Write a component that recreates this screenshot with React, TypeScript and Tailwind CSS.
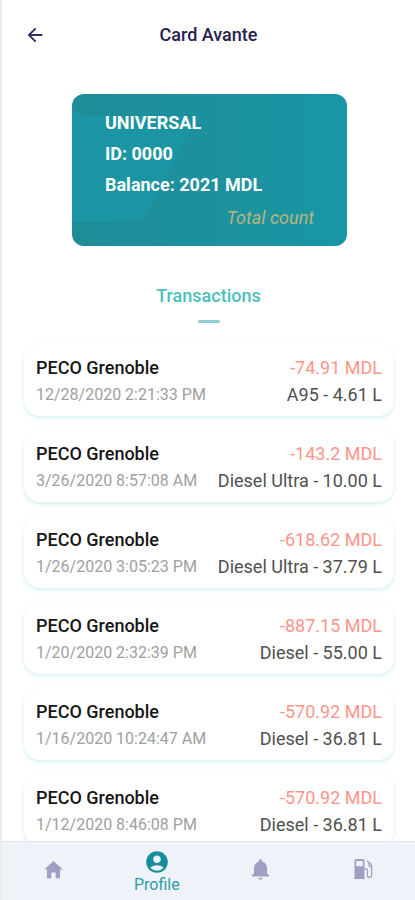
import React from "react";
import { IoMdHome, IoMdNotifications } from "react-icons/io";
import { MdAccountCircle, MdArrowBack } from "react-icons/md";

type Transaction = {
  station: string;
  date: string;
  amount: string;
  fuel: string;
};

const transactions: Transaction[] = [
  { station: "PECO Grenoble", date: "12/28/2020 2:21:33 PM", amount: "-74.91 MDL", fuel: "A95 - 4.61 L" },
  { station: "PECO Grenoble", date: "3/26/2020 8:57:08 AM", amount: "-143.2 MDL", fuel: "Diesel Ultra - 10.00 L" },
  { station: "PECO Grenoble", date: "1/26/2020 3:05:23 PM", amount: "-618.62 MDL", fuel: "Diesel Ultra - 37.79 L" },
  { station: "PECO Grenoble", date: "1/20/2020 2:32:39 PM", amount: "-887.15 MDL", fuel: "Diesel - 55.00 L" },
  { station: "PECO Grenoble", date: "1/16/2020 10:24:47 AM", amount: "-570.92 MDL", fuel: "Diesel - 36.81 L" },
  { station: "PECO Grenoble", date: "1/12/2020 8:46:08 PM", amount: "-570.92 MDL", fuel: "Diesel - 36.81 L" },
];

function FuelIcon() {
  return (
    <svg width="22" height="20" viewBox="-2 0 22 20" fill="none" aria-hidden="true">
      <path
        fillRule="evenodd"
        clipRule="evenodd"
        d="M2 0h7a1.500 1.500 0 0 1 1.500 1.500V18.500H11V20H0v-1.500h.5V1.500A1.500 1.500 0 0 1 2 0ZM2.200 2v5.200h6.600V2Z"
        fill="currentColor"
      />
      <path
        d="M10.500 10h1.500c.9 0 1.400.6 1.400 1.400v5.100c0 1 .6 1.900 1.900 1.900s2.300-.9 2.300-1.900V6.800c0-.6-.2-1-.6-1.500L12.800 1.400M15 3.700v2.600c0 1 .8 1.600 2.300 1.600"
        stroke="currentColor"
        strokeWidth="1.300"
      />
    </svg>
  );
}

function FuelCard() {
  return (
    <section className="relative mt-6 mr-[68px] ml-[70px] h-[152px] overflow-hidden rounded-xl bg-linear-to-r from-[#1f8c97] to-[#1996a6] text-white">
      <svg className="absolute inset-0 h-full w-full" viewBox="0 0 275 152" preserveAspectRatio="none" aria-hidden="true">
        <path d="M0 12Q5 22 20 22H112Q124 24 117 40L80 111Q71 128 52 128H0Z" fill="#1b95a3" />
      </svg>
      <div className="relative flex h-full flex-col px-[33px] pt-[13px] text-lg leading-[31px] font-bold">
        <p>UNIVERSAL</p>
        <p>ID: 0000</p>
        <p>Balance: 2021 MDL</p>
        <p className="mt-0.5 self-end font-normal text-[#b9b67c] italic">Total count</p>
      </div>
    </section>
  );
}

function TransactionCard({ station, date, amount, fuel }: Transaction) {
  return (
    <li className="flex h-[72px] shrink-0 justify-between rounded-2xl bg-white px-3 pt-[11px] whitespace-nowrap shadow-[0_2px_4px_rgba(110,205,210,0.3)]">
      <div>
        <h3 className="text-lg leading-[26px] font-medium text-[#161616]">{station}</h3>
        <p className="text-base leading-7 text-[#a0a0a0]">{date}</p>
      </div>
      <div className="text-right text-lg">
        <p className="leading-[26px] text-[#ff958a]">{amount}</p>
        <p className="leading-7 text-[#505050]">{fuel}</p>
      </div>
    </li>
  );
}

export default function App() {
  return (
    <div className="flex h-screen flex-col overflow-hidden border-l-2 border-[#ececec] bg-white font-[Roboto,sans-serif]">
      <header className="grid h-[70px] shrink-0 grid-cols-[1fr_auto_1fr] items-center px-[22px]">
        <button type="button" aria-label="Back" className="justify-self-start text-[#302b60]">
          <MdArrowBack size={22} />
        </button>
        <h1 className="text-lg font-medium text-[#26224f]">Card Avante</h1>
      </header>
      <main className="min-h-0 flex-1 overflow-hidden">
        <FuelCard />
        <div className="mt-[38px] flex flex-col items-center">
          <h2 className="text-lg leading-6 font-medium text-[#4bbfbd]">Transactions</h2>
          <span className="mt-3 h-[3px] w-[22px] rounded-full bg-[#8dcdd2]" />
        </div>
        <ul className="mt-[21px] flex flex-col gap-3.5 pr-[21px] pl-[22px]">
          {transactions.map((t) => (
            <TransactionCard key={t.date} {...t} />
          ))}
        </ul>
      </main>
      <nav className="grid h-[59px] shrink-0 grid-cols-4 border-t border-[#dbe5eb] bg-[#eff3f9] text-[#a09fc3]">
        <a href="#home" aria-label="Home" className="flex items-center justify-center pb-1">
          <IoMdHome size={23} />
        </a>
        <a href="#profile" className="flex flex-col items-center pt-[7px] text-base leading-5 text-[#2c9da8]">
          <MdAccountCircle size={26} className="text-[#158f9d]" />
          Profile
        </a>
        <a href="#notifications" aria-label="Notifications" className="flex items-center justify-center pb-1">
          <IoMdNotifications size={25} />
        </a>
        <a href="#stations" aria-label="Fuel stations" className="flex items-center justify-center pb-1">
          <FuelIcon />
        </a>
      </nav>
    </div>
  );
}
